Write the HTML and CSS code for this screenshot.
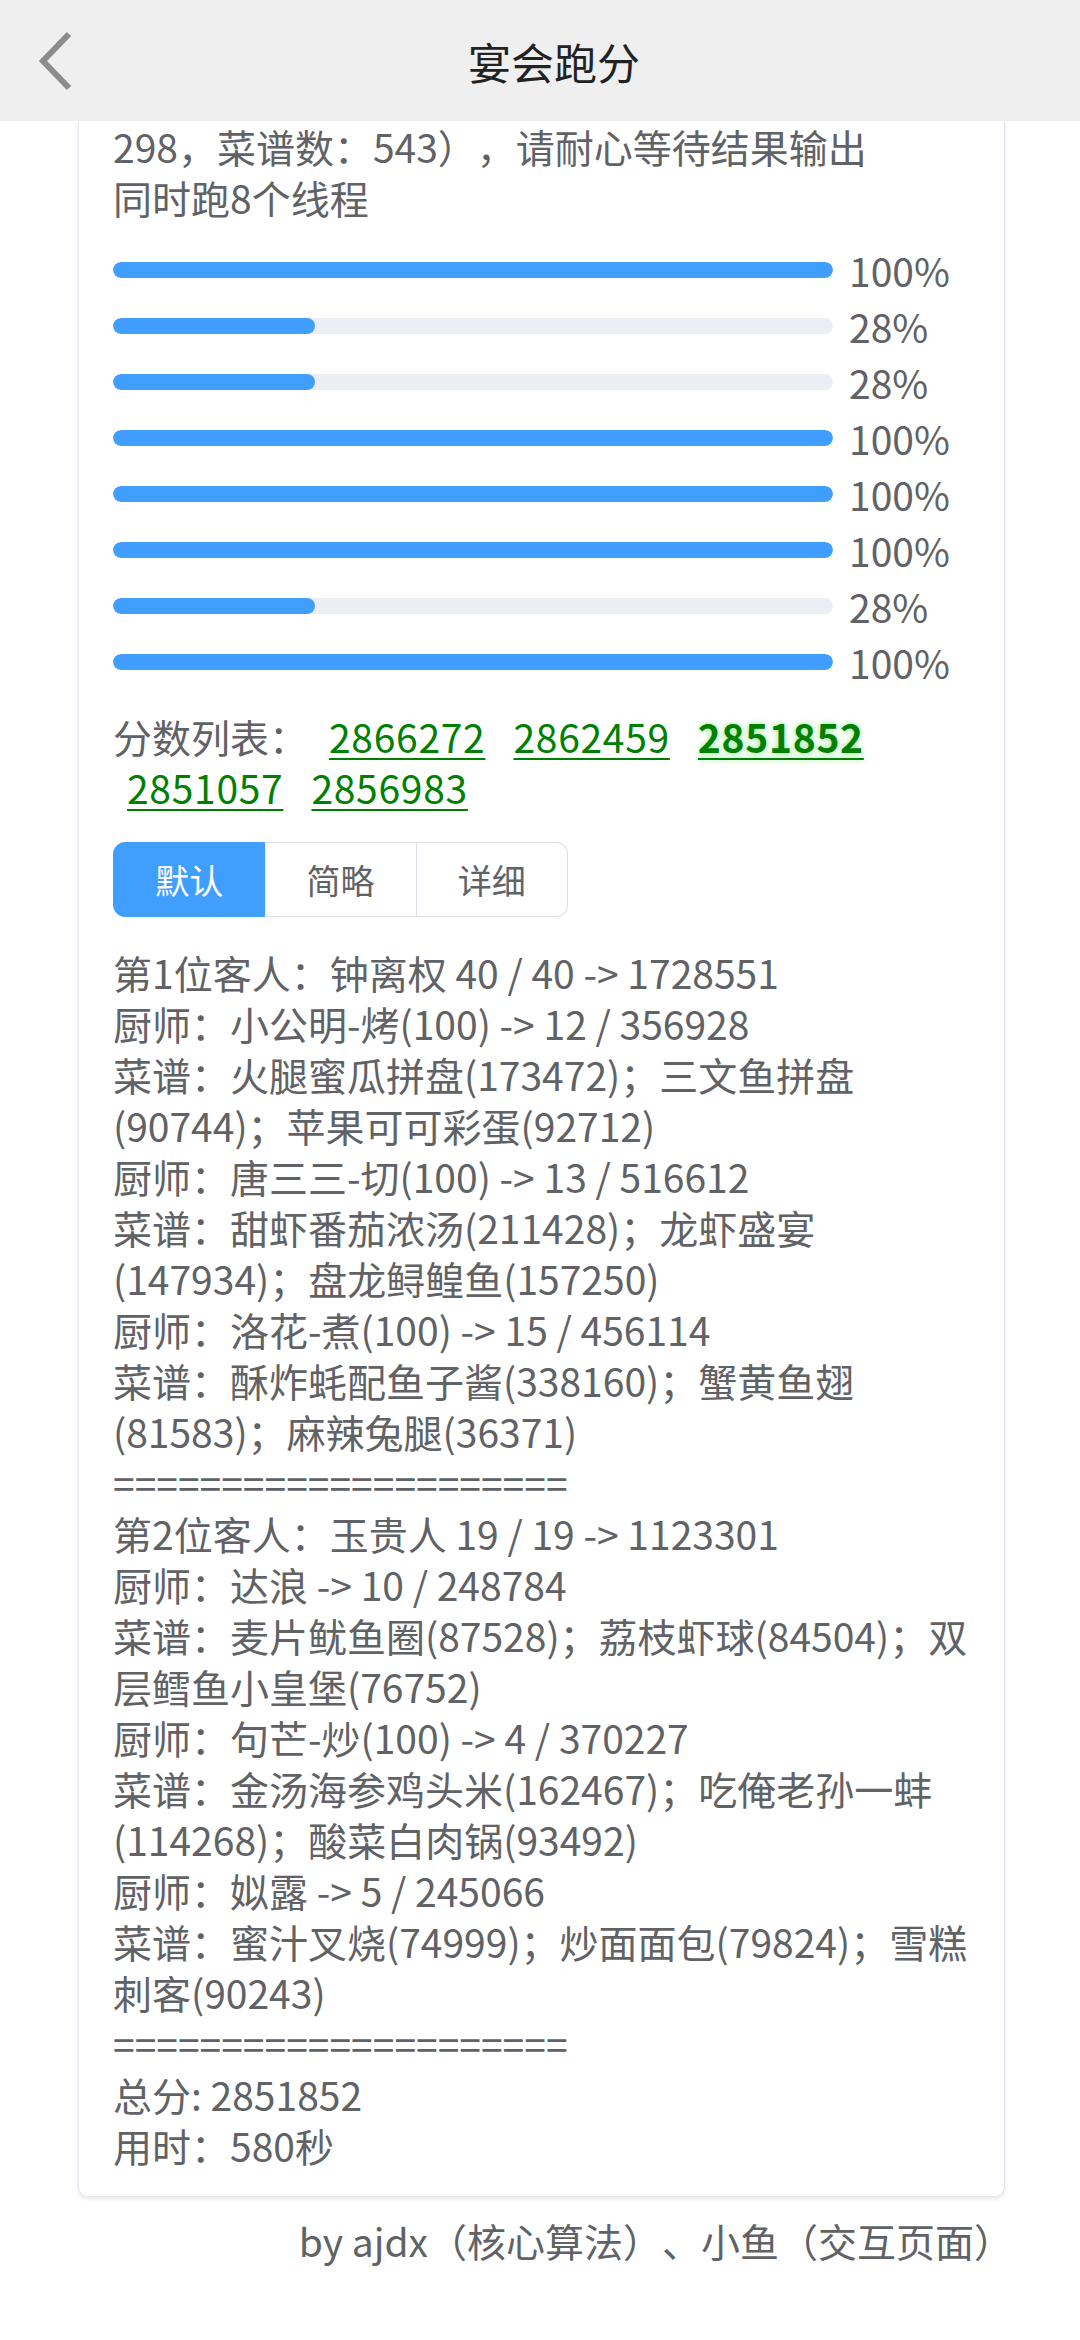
FILE: index.html
```html
<!DOCTYPE html>
<html lang="zh-CN">
<head>
<meta charset="utf-8">
<title>宴会跑分</title>
<link rel="stylesheet" href="styles.css">
</head>
<body>
<header class="header">
  <div class="back">
    <svg width="40" height="60" viewBox="0 0 40 60"><polyline points="33,3 7,30 33,57" fill="none" stroke="#8c8c8c" stroke-width="6"/></svg>
  </div>
  <div class="title">宴会跑分</div>
</header>
<main class="card">
  <div class="intro">
    <div>298，菜谱数：543），请耐心等待结果输出</div>
    <div>同时跑8个线程</div>
  </div>
  <div class="progress">
    <div class="prow"><div class="track"><div class="fill" style="width:100%"></div></div><span class="pct">100%</span></div>
    <div class="prow"><div class="track"><div class="fill" style="width:28%"></div></div><span class="pct">28%</span></div>
    <div class="prow"><div class="track"><div class="fill" style="width:28%"></div></div><span class="pct">28%</span></div>
    <div class="prow"><div class="track"><div class="fill" style="width:100%"></div></div><span class="pct">100%</span></div>
    <div class="prow"><div class="track"><div class="fill" style="width:100%"></div></div><span class="pct">100%</span></div>
    <div class="prow"><div class="track"><div class="fill" style="width:100%"></div></div><span class="pct">100%</span></div>
    <div class="prow"><div class="track"><div class="fill" style="width:28%"></div></div><span class="pct">28%</span></div>
    <div class="prow"><div class="track"><div class="fill" style="width:100%"></div></div><span class="pct">100%</span></div>
  </div>
  <div class="scores">分数列表：<a class="score">2866272</a><a class="score">2862459</a><a class="score best">2851852</a><a class="score">2851057</a><a class="score">2856983</a></div>
  <div class="tabs">
    <div class="tab active">默认</div>
    <div class="tab">简略</div>
    <div class="tab">详细</div>
  </div>
  <div class="detail">
    <div>第1位客人：钟离权 40 / 40 -&gt; 1728551</div>
    <div>厨师：小公明-烤(100) -&gt; 12 / 356928</div>
    <div>菜谱：火腿蜜瓜拼盘(173472)；三文鱼拼盘<br>(90744)；苹果可可彩蛋(92712)</div>
    <div>厨师：唐三三-切(100) -&gt; 13 / 516612</div>
    <div>菜谱：甜虾番茄浓汤(211428)；龙虾盛宴<br>(147934)；盘龙鲟鳇鱼(157250)</div>
    <div>厨师：洛花-煮(100) -&gt; 15 / 456114</div>
    <div>菜谱：酥炸蚝配鱼子酱(338160)；蟹黄鱼翅<br>(81583)；麻辣兔腿(36371)</div>
    <div>=====================</div>
    <div>第2位客人：玉贵人 19 / 19 -&gt; 1123301</div>
    <div>厨师：达浪 -&gt; 10 / 248784</div>
    <div>菜谱：麦片鱿鱼圈(87528)；荔枝虾球(84504)；双<br>层鳕鱼小皇堡(76752)</div>
    <div>厨师：句芒-炒(100) -&gt; 4 / 370227</div>
    <div>菜谱：金汤海参鸡头米(162467)；吃俺老孙一蚌<br>(114268)；酸菜白肉锅(93492)</div>
    <div>厨师：姒露 -&gt; 5 / 245066</div>
    <div>菜谱：蜜汁叉烧(74999)；炒面面包(79824)；雪糕<br>刺客(90243)</div>
    <div>=====================</div>
    <div>总分: 2851852</div>
    <div>用时：580秒</div>
  </div>
</main>
<footer class="footer">by ajdx（核心算法）、小鱼（交互页面）</footer>
</body>
</html>
```
FILE: styles.css
```css
* { box-sizing: border-box; }
html, body { margin: 0; padding: 0; background: #fff; }
body {
  font-family: "Noto Sans CJK SC", "Noto Sans", sans-serif;
  color: #606266;
  width: 1080px;
  text-spacing-trim: space-all;
}
.header {
  height: 121px;
  background: #efefef;
  display: flex;
  align-items: center;
}
.back {
  width: 100px;
  height: 121px;
  display: flex;
  align-items: center;
  padding-left: 36px;
}
.back svg { display: block; }
.title {
  flex: 1;
  text-align: center;
  padding-right: 72px;
  font-size: 43px;
  color: #222;
}
.card {
  display: block;
  margin: 0 75px 0 78px;
  border: 1px solid #e4e7ed;
  border-top: none;
  border-radius: 0 0 10px 10px;
  box-shadow: 0 2px 4px rgba(0, 0, 0, 0.1);
  padding: 0 20px 25px 34px;
  font-size: 39px;
  line-height: 51px;
}
.progress { margin-top: 19px; }
.prow {
  display: flex;
  align-items: center;
  height: 56px;
}
.track {
  width: 720px;
  height: 16px;
  border-radius: 8px;
  background: #ebeef5;
  overflow: hidden;
  flex: none;
}
.fill {
  height: 100%;
  background: #409eff;
  border-radius: 8px;
}
.pct {
  margin-left: 16px;
  line-height: 56px;
}
.scores { margin-top: 21px; }
.score {
  display: inline-block;
  letter-spacing: 0.7px;
  color: #008000;
  text-decoration: underline;
  text-decoration-thickness: 2px;
  text-underline-offset: 5px;
  margin: 0 14px;
}
.score:first-child { margin-left: 21px; }
.score.best {
  font-weight: bold;
  text-shadow: 0 0 6px #8fe88f;
}
.tabs {
  margin-top: 29px;
  display: flex;
  width: 455px;
  height: 75px;
}
.tab {
  flex: 1;
  display: flex;
  align-items: center;
  justify-content: center;
  font-size: 34px;
  line-height: 1;
  color: #606266;
  border: 1px solid #dcdfe6;
  border-left: none;
}
.tab:first-child { border-left: 1px solid #dcdfe6; border-radius: 12px 0 0 12px; }
.tab:last-child { border-radius: 0 12px 12px 0; }
.tab.active {
  background: #409eff;
  border-color: #409eff;
  color: #fff;
}
.detail { margin-top: 30px; }
.footer {
  margin-top: 18px;
  padding-right: 67px;
  text-align: right;
  font-size: 39px;
  line-height: 51px;
  color: #606266;
}
```
